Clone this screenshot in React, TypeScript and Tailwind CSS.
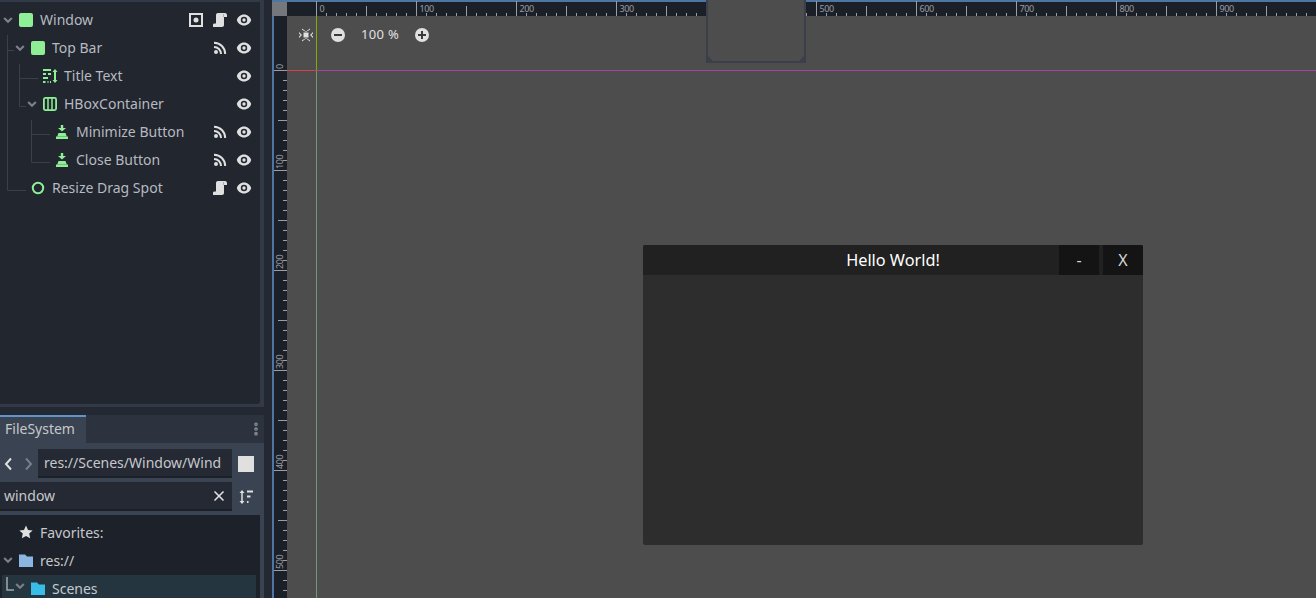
import { EllipsisVertical, X } from "lucide-react";

const FONT = "font-['Noto_Sans',sans-serif]";
const GREEN = "#8eef97";

// Icons drawn by hand, the editor's own glyphs are not in the icon packages.
const Eye = () => (
  <svg width="16" height="16" viewBox="0 0 16 16">
    <path d="M8 2.500C4.500 2.500 1.600 5 .8 8c.8 3 3.700 5.500 7.200 5.500s6.400-2.500 7.200-5.500C14.400 5 11.500 2.500 8 2.500zm0 2.300a3.200 3.200 0 1 1 0 6.400 3.200 3.200 0 0 1 0-6.400z" fill="#e0e0e0" fillRule="evenodd" />
    <circle cx="8" cy="8" r="1.700" fill="#e0e0e0" />
  </svg>
);

const Script = () => (
  <svg width="16" height="16" viewBox="0 0 16 16">
    <path d="M6 1h7c1 0 2 .8 2 2v2h-3v8c0 1.200-.8 2-2 2H1v-2c0-1 .6-1.500 1.500-1.500H4V3c0-1.200.8-2 2-2z" fill="#e0e0e0" />
    <path d="M11.500 2v3" stroke="#a9abae" strokeWidth="1" />
  </svg>
);

const Signal = () => (
  <svg width="16" height="16" viewBox="0 0 16 16" fill="none" stroke="#e0e0e0" strokeWidth="2">
    <circle cx="4" cy="12" r="2" fill="#e0e0e0" stroke="none" />
    <path d="M2 7a7 7 0 0 1 7 7" />
    <path d="M2 2.800a11.200 11.200 0 0 1 11.200 11.200" />
  </svg>
);

const Instance = () => (
  <svg width="16" height="16" viewBox="0 0 16 16">
    <path d="M1 1h14v14H1zm2 2v10h10V3z" fill="#e0e0e0" fillRule="evenodd" />
    <circle cx="8" cy="8" r="2.500" fill="#e0e0e0" />
  </svg>
);

const Chevron = ({ dim = false }: { dim?: boolean }) => (
  <svg width="12" height="12" viewBox="0 0 12 12" fill="none" stroke={dim ? "#7b7f86" : "#7e8188"} strokeWidth="2.200">
    <path d="M2.200 4 6 7.800 9.800 4" />
  </svg>
);

const GreenSquare = () => <span className="block h-[14px] w-[14px] rounded-[2px] bg-[#8eef97]" />;

const TextIcon = () => (
  <svg width="16" height="16" viewBox="0 0 16 16" stroke={GREEN} strokeWidth="2" fill="none">
    <path d="M0 2h8M0 6h3M5 6h3M0 10h5M0 14h2.500M4.500 14h1M7 14h1" />
    <path d="M12 3v10" strokeWidth="2" />
    <path d="M9.500 4 12 1l2.500 3zM9.500 12l2.500 3 2.500-3z" fill={GREEN} stroke="none" />
  </svg>
);

const HBoxIcon = () => (
  <svg width="14" height="14" viewBox="0 0 14 14" fill="none" stroke={GREEN} strokeWidth="1.800">
    <rect x="0.900" y="0.900" width="12.200" height="12.200" rx="1.500" />
    <path d="M5 1v12M9 1v12" strokeWidth="1.500" />
  </svg>
);

const ButtonIcon = () => (
  <svg width="14" height="14" viewBox="0 0 14 14" fill={GREEN}>
    <path d="M5.800 0h2.400v3H11L7 6.500 3 3h2.800z" />
    <path d="M3.500 8h7l1.300 3.500H2.200z" />
    <path d="M1 11.500h12V14H1z" />
  </svg>
);

const RingIcon = () => (
  <svg width="14" height="14" viewBox="0 0 14 14" fill="none" stroke={GREEN} strokeWidth="2">
    <circle cx="7" cy="7" r="5.200" />
  </svg>
);

type Row = {
  name: string;
  depth: number;
  icon: React.ReactNode;
  open?: boolean;
  actions: React.ReactNode[];
};

const rows: Row[] = [
  { name: "Window", depth: 0, icon: <GreenSquare />, open: true, actions: [<Instance />, <Script />] },
  { name: "Top Bar", depth: 1, icon: <GreenSquare />, open: true, actions: [<Signal />] },
  { name: "Title Text", depth: 2, icon: <TextIcon />, actions: [] },
  { name: "HBoxContainer", depth: 2, icon: <HBoxIcon />, open: true, actions: [] },
  { name: "Minimize Button", depth: 3, icon: <ButtonIcon />, actions: [<Signal />] },
  { name: "Close Button", depth: 3, icon: <ButtonIcon />, actions: [<Signal />] },
  { name: "Resize Drag Spot", depth: 1, icon: <RingIcon />, actions: [<Script />] },
];

const TreeRow = ({ row }: { row: Row }) => (
  <div className="flex h-[28px] items-center pr-[8px]" style={{ paddingLeft: row.depth * 12 + 2 }}>
    <span className="flex w-[12px] shrink-0 items-center justify-center">{row.open && <Chevron />}</span>
    <span className="ml-[5px] flex w-[21px] shrink-0 items-center">{row.icon}</span>
    <span className="flex-1 pb-[2px] text-[14px] text-[#b7bac0]">{row.name}</span>
    <div className="flex items-center gap-[8px]">
      {row.actions.map((a, i) => (
        <span key={i} className="flex w-[16px] justify-center">{a}</span>
      ))}
      <Eye />
    </div>
  </div>
);

const SceneTree = () => (
  <div className="h-[407px] w-[264px] shrink-0 bg-[#333a47] pt-[2px]">
    <div className="relative h-[402px] w-[260px] rounded-br-[3px] bg-[#21262f] pt-[4px]">
      <svg className="absolute left-0 top-0" width="60" height="200" fill="none" stroke="#3a3f49">
        <path d="M7.500 33v155.500H26M7.500 48.500H14M19.500 62v42.500H26M19.500 76.500H38M31.500 118v42.500H50M31.500 132.500H50" />
      </svg>
      <div className="relative">
        {rows.map((r) => (
          <TreeRow key={r.name} row={r} />
        ))}
      </div>
    </div>
  </div>
);

const FileSystem = () => (
  <div className="mt-[8px] w-[264px] flex-1 bg-[#3a4351]">
    <div className="flex h-[28px] items-center justify-between bg-[#2c323e]">
      <div className="flex h-full w-[86px] items-center border-t-2 border-[#5f95cb] bg-[#3a4351] pb-[3px] pl-[5px] text-[14px] text-[#c6c8cc]">FileSystem</div>
      <EllipsisVertical size={16} strokeWidth={3.500} color="#8a8e95" />
    </div>
    <div className="mt-[6px] flex h-[29px] items-center">
      <svg width="38" height="16" viewBox="0 0 38 16" fill="none" strokeWidth="2">
        <path d="M11 2.500 6 8l5 5.500" stroke="#e0e0e0" />
        <path d="M26 2.500 31 8l-5 5.500" stroke="#7a7f87" />
      </svg>
      <div className="flex h-full w-[194px] items-center overflow-hidden whitespace-nowrap border-b-2 border-[#1c2027] bg-[#242933] pl-[6px] text-[14px] text-[#c6c8cc]">res://Scenes/Window/Wind</div>
      <span className="ml-[6px] h-[16px] w-[16px] bg-[#e0e0e0]" />
    </div>
    <div className="mt-[4px] flex h-[29px] items-center">
      <div className="flex h-full w-[232px] items-center justify-between border-b-2 border-[#1c2027] bg-[#242933] pl-[4px] pr-[5px] text-[14px] text-[#c6c8cc]">
        window
        <X size={16} strokeWidth={2.500} color="#e0e0e0" />
      </div>
      <svg className="ml-[6px]" width="16" height="16" viewBox="0 0 16 16" fill="none" stroke="#e0e0e0" strokeWidth="2">
        <path d="M4 2v12" strokeWidth="1.500" />
        <path d="M1.500 4 4 1l2.500 3zM1.500 12 4 15l2.500-3z" fill="#e0e0e0" stroke="none" />
        <path d="M9 2.500h6M9 7.500h3.500M9 13h1.500" />
      </svg>
    </div>
    <div className="mt-[4px] h-[83px] w-[260px] bg-[#1d2129] pt-[3px] text-[14px] text-[#c6c8cc]">
      <div className="flex h-[28px] items-center">
        <svg className="ml-[19px] mr-[7px]" width="14" height="14" viewBox="0 0 14 14" fill="#e0e0e0">
          <path d="M7 .5 9 5l4.700.5-3.500 3.100 1 4.700L7 10.900l-4.200 2.400 1-4.700L.3 5.500 5 5z" />
        </svg>
        Favorites:
      </div>
      <div className="flex h-[28px] items-center">
        <span className="ml-[2px] mr-[5px] flex w-[12px]"><Chevron dim /></span>
        <svg className="mr-[7px]" width="14" height="14" viewBox="0 0 14 14" fill="#8ab6e1">
          <path d="M0 1.500h6L8 3.500h6V14H0z" />
        </svg>
        res://
      </div>
      <div className="mx-[2px] mt-[1px] flex h-[23px] w-[254px] items-start bg-[#243540] pt-[2px]">
        <svg className="mt-[-1px]" width="12" height="16" viewBox="0 0 12 16" fill="none" stroke="#a3a7ac" strokeWidth="1.500">
          <path d="M5 1v13h7" />
        </svg>
        <span className="mr-[5px] mt-[3px] flex w-[12px]"><Chevron dim /></span>
        <svg className="mr-[7px] mt-[4px]" width="14" height="14" viewBox="0 0 14 14" fill="#38bde8">
          <path d="M0 1.500h6L8 3.500h6V14H0z" />
        </svg>
        <span className="leading-[24px]">Scenes</span>
      </div>
    </div>
  </div>
);

const ticks = Array.from({ length: 105 }, (_, i) => i * 10);

const TopRuler = () => (
  <svg className="block" width="1029" height="16" fill="none" stroke="#9a9da3">
    {ticks.map((t) => {
      const x = t + 29.500;
      const y = t % 100 === 0 ? 1 : t % 50 === 0 ? 6 : 13;
      return <path key={t} d={`M${x} ${y}V16`} />;
    })}
    {ticks.filter((t) => t % 100 === 0 && t <= 900).map((t) => (
      <text key={t} x={t + 32.500} y={12} fontSize="9" letterSpacing="-0.4" fill="#9a9da3" stroke="none" fontFamily="Noto Sans">{t}</text>
    ))}
  </svg>
);

const SideRuler = () => (
  <svg className="block" width="13" height="582" fill="none" stroke="#9a9da3">
    {Array.from({ length: 60 }, (_, i) => i * 10).map((t) => {
      const y = t + 54.500;
      const x = t % 100 === 0 ? 0 : t % 50 === 0 ? 4 : 9;
      return <path key={t} d={`M${x} ${y}H13`} />;
    })}
    {[0, 100, 200, 300, 400, 500].map((t) => (
      <text key={t} transform={`translate(9 ${t + 53}) rotate(-90)`} fontSize="9" letterSpacing="-0.4" fill="#9a9da3" stroke="none" fontFamily="Noto Sans">{t}</text>
    ))}
  </svg>
);

const Viewport = () => (
  <div className="relative flex-1 overflow-hidden bg-[#4d4d4d]">
    <span className="absolute left-[29px] top-0 h-[54px] w-px bg-[#7fb000]" />
    <span className="absolute bottom-0 left-[29px] top-[54px] w-px bg-[#6f9a73]" />
    <span className="absolute left-0 top-[54px] h-px w-[29px] bg-[#d8404a]" />
    <span className="absolute left-[29px] right-0 top-[54px] h-px bg-[#a8439c]" />

    <div className="absolute left-[11px] top-[9px] flex items-center">
      <svg width="16" height="16" viewBox="0 0 16 16" fill="#e0e0e0">
        <rect x="5.500" y="5.500" width="5" height="5" />
        <path d="M4 1.500 8 4.500 12 1.500 12 2.800 8 5 4 2.800zM4 14.500 8 11.500 12 14.500 12 13.200 8 11 4 13.200zM1 5l3 3-3 3V9.500L2.500 8 1 6.500zM15 5l-3 3 3 3V9.500L13.500 8 15 6.500z" />
      </svg>
      <span className="ml-[17px] flex h-[14px] w-[14px] items-center justify-center rounded-full bg-[#e0e0e0]">
        <span className="h-[2px] w-[8px] bg-[#3a3a3a]" />
      </span>
      <span className={`ml-[16px] w-[38px] whitespace-nowrap text-[13px] tracking-[0.3px] text-[#e0e0e0] ${FONT}`}>100 %</span>
      <span className="relative ml-[16px] flex h-[14px] w-[14px] items-center justify-center rounded-full bg-[#e0e0e0]">
        <span className="h-[2px] w-[8px] bg-[#3a3a3a]" />
        <span className="absolute h-[8px] w-[2px] bg-[#3a3a3a]" />
      </span>
    </div>

    {/* game window being edited */}
    <div className={`absolute left-[356px] top-[229px] flex h-[300px] w-[500px] flex-col overflow-hidden rounded-[2px] bg-[#2d2d2d] ${FONT}`}>
      <div className="flex h-[30px] items-stretch bg-[#212121]">
        <div className="flex flex-1 items-center justify-center pl-[84px] text-[16.300px] text-white">Hello World!</div>
        <button className="w-[40px] bg-[#141414] text-[16px] text-[#d8d8d8]">-</button>
        <button className="ml-[4px] w-[40px] bg-[#141414] text-[16px] text-[#d8d8d8]">X</button>
      </div>
    </div>
  </div>
);

const App = () => (
  <div className={`flex h-[598px] w-[1316px] overflow-hidden bg-[#232833] ${FONT}`}>
    <div className="flex w-[272px] shrink-0 flex-col">
      <SceneTree />
      <FileSystem />
    </div>
    <div className="relative flex min-w-0 flex-1 flex-col">
      <div className="flex h-[16px] border-t-2 border-[#4f76a3] bg-[#1b2028]">
        <span className="w-[15px] shrink-0 bg-[#74787d]" />
        <div className="mt-[-2px]"><TopRuler /></div>
      </div>
      <div className="flex flex-1">
        <div className="w-[15px] shrink-0 border-l-2 border-[#4f76a3] bg-[#1b2028]">
          <SideRuler />
        </div>
        <Viewport />
      </div>
      {/* tab of the project's top bar, hanging over the ruler */}
      <div className="absolute left-[434px] top-0 h-[63px] w-[100px] rounded-b-[1px] border-2 border-t-0 border-[#3b3f4a] bg-[#4d4d4d]">
        <svg className="absolute bottom-0 left-0" width="5" height="5" fill="#3b3f4a"><path d="M0 0l5 5H0z" /></svg>
        <svg className="absolute bottom-0 right-0" width="5" height="5" fill="#3b3f4a"><path d="M5 0v5H0z" /></svg>
      </div>
    </div>
  </div>
);

export default App;
